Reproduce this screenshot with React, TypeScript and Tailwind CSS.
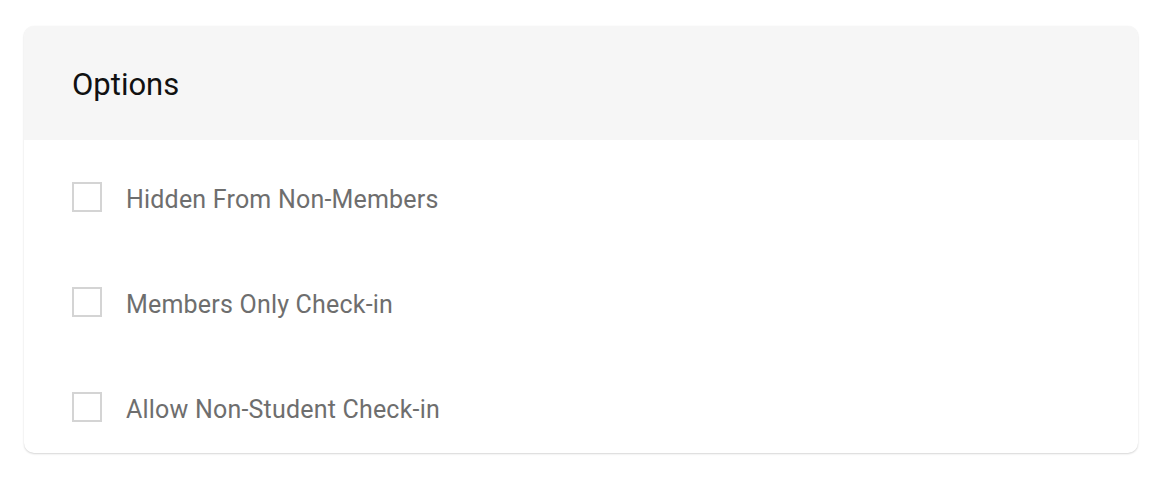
import React from 'react';

const options = [
  'Hidden From Non-Members',
  'Members Only Check-in',
  'Allow Non-Student Check-in',
];

function OptionRow({ label }: { label: string }) {
  return (
    <label className="flex items-center gap-[24px] cursor-pointer">
      <span className="w-[30px] h-[30px] border-2 border-[#d4d4d4] bg-white shrink-0" />
      <span className="text-[25px] tracking-[0.2px] leading-none text-[#6e6e6e] pt-[4px]">{label}</span>
    </label>
  );
}

export default function App() {
  return (
    <div className="min-h-screen bg-white pt-[26px] pl-[24px]" style={{ fontFamily: 'Roboto, "Noto Sans", sans-serif' }}>
      <div className="w-[1114px] rounded-[10px] bg-white overflow-hidden shadow-[0_1px_2px_rgba(0,0,0,0.16),0_0_1px_rgba(0,0,0,0.06)]">
        <div className="h-[114px] bg-[#f6f6f6] flex items-center px-[48px]">
          <h2 className="text-[31px] leading-none text-[#111] pt-[2px]">Options</h2>
        </div>
        <div className="flex flex-col gap-[75px] pt-[42px] pb-[31px] px-[48px]">
          {options.map((o) => (
            <OptionRow key={o} label={o} />
          ))}
        </div>
      </div>
    </div>
  );
}
